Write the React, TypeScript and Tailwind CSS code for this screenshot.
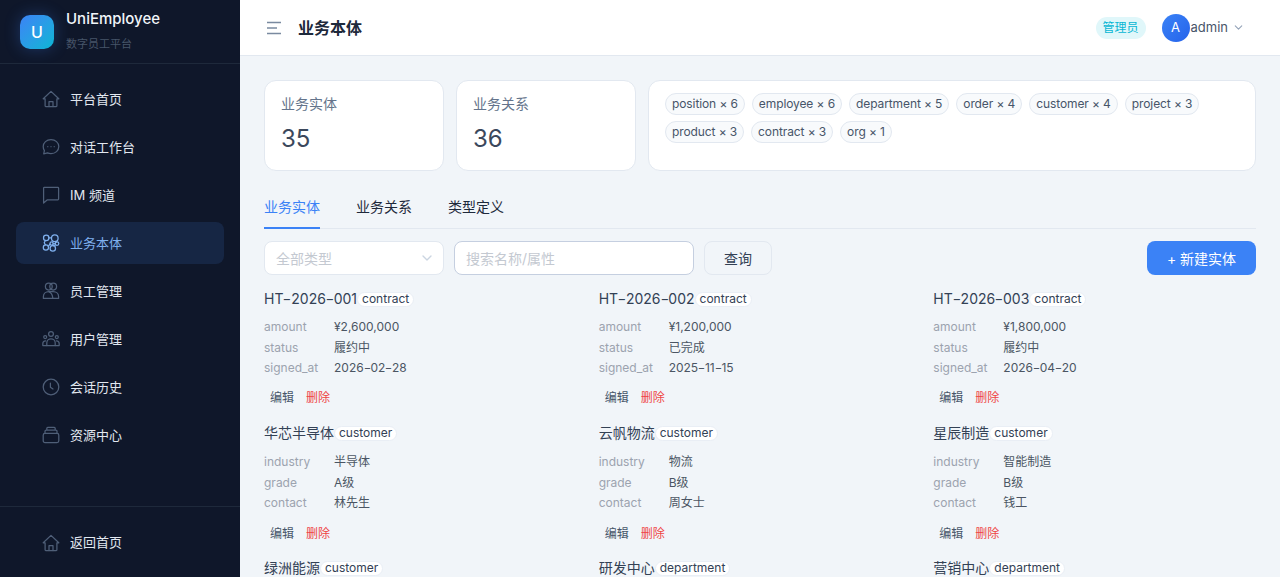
import { ChevronDown } from "lucide-react";
import { Fragment } from "react";
import type { ReactNode } from "react";

const fontStack = "font-['Inter','Noto_Sans_CJK_SC',sans-serif]";

const Ico = ({ children }: { children: ReactNode }) => (
  <svg viewBox="0 0 18 18" fill="none" stroke="currentColor" strokeWidth="1.25" strokeLinecap="round" strokeLinejoin="round" className="w-[18px] h-[18px] shrink-0">
    {children}
  </svg>
);

const HomeIcon = () => (
  <Ico>
    <path d="M1.2 8.8 9 1.4l7.8 7.4h-1.9v7a.7.7 0 0 1-.7.7H3.8a.7.7 0 0 1-.7-.7v-7H1.2Z" />
    <path d="M7 16.5v-4.8h4v4.8" />
  </Ico>
);

const navItems = [
  {
    label: "平台首页",
    icon: <HomeIcon />,
  },
  {
    label: "对话工作台",
    icon: (
      <Ico>
        <path d="M9 1.6c4.4 0 7.8 3 7.8 7s-3.4 7-7.8 7c-1.3 0-2.4-.2-3.5-.7l-3.8 1 .7-3.2C1.6 11.5 1.2 10 1.2 8.6c0-4 3.4-7 7.8-7Z" />
        <path d="M5.8 8.7h.01M9 8.7h.01M12.2 8.7h.01" />
      </Ico>
    ),
  },
  {
    label: "IM 频道",
    icon: (
      <Ico>
        <path d="M2.2 1.4h13.6a.8.8 0 0 1 .8.8v10.8a.8.8 0 0 1-.8.8H5.4l-3.8 3.2V2.2a.7.7 0 0 1 .6-.8Z" />
      </Ico>
    ),
  },
  {
    label: "业务本体",
    active: true,
    icon: (
      <Ico>
        <circle cx="4.2" cy="3.9" r="2.7" />
        <circle cx="12.8" cy="4.2" r="3.3" />
        <circle cx="3.9" cy="13.4" r="2.6" />
        <circle cx="10.8" cy="14.4" r="2.7" />
        <circle cx="15" cy="9.6" r="1.8" />
        <circle cx="9.6" cy="9.4" r="1.6" />
        <path d="M6.9 3.9h2.6M3.4 6.5l-1.2 2.2 1.2 2.1M6.4 12.4l1.6-2.6M11 9.8l2.4-.2M13.4 7.4l.8.6M11.2 11.6l2.6-.6" />
      </Ico>
    ),
  },
  {
    label: "员工管理",
    icon: (
      <Ico>
        <circle cx="6.8" cy="4.6" r="3.4" />
        <circle cx="11.2" cy="4.6" r="3.4" />
        <path d="M1.4 16.4v-1.8c0-3 2.4-5 5.4-5h4.4c3 0 5.4 2 5.4 5v1.8H1.4Z" />
        <path d="M7 9.8c2.2.8 3.6 3 3.8 6.4" />
      </Ico>
    ),
  },
  {
    label: "用户管理",
    icon: (
      <Ico>
        <circle cx="9" cy="4" r="2.4" />
        <circle cx="3.2" cy="7" r="1.5" />
        <circle cx="14.8" cy="7" r="1.5" />
        <path d="M4.8 15.6v-2.8c0-2.2 1.8-4 4.2-4s4.2 1.8 4.2 4v2.8" />
        <path d="M.8 15.6v-1.8c0-1.6 1.1-3 2.8-3M17.2 15.6v-1.8c0-1.6-1.1-3-2.8-3M.8 15.6h16.4" />
      </Ico>
    ),
  },
  {
    label: "会话历史",
    icon: (
      <Ico>
        <circle cx="9" cy="9" r="7.8" />
        <path d="M8.4 5.2v4l2.6 1.8" />
      </Ico>
    ),
  },
  {
    label: "资源中心",
    icon: (
      <Ico>
        <rect x="1.2" y="7.4" width="15.6" height="9.2" rx="1.8" />
        <path d="M3 7.4V5.2a1.2 1.2 0 0 1 1.2-1.2h9.6A1.2 1.2 0 0 1 15 5.2v2.2M4.8 4V2.4a1 1 0 0 1 1-1h6.4a1 1 0 0 1 1 1V4" />
      </Ico>
    ),
  },
];

const tags = [
  "position × 6",
  "employee × 6",
  "department × 5",
  "order × 4",
  "customer × 4",
  "project × 3",
  "product × 3",
  "contract × 3",
  "org × 1",
];

const entities = [
  { name: "HT-2026-001", type: "contract", attrs: [["amount", "¥2,600,000"], ["status", "履约中"], ["signed_at", "2026-02-28"]] },
  { name: "HT-2026-002", type: "contract", attrs: [["amount", "¥1,200,000"], ["status", "已完成"], ["signed_at", "2025-11-15"]] },
  { name: "HT-2026-003", type: "contract", attrs: [["amount", "¥1,800,000"], ["status", "履约中"], ["signed_at", "2026-04-20"]] },
  { name: "华芯半导体", type: "customer", tall: true, attrs: [["industry", "半导体"], ["grade", "A级"], ["contact", "林先生"]] },
  { name: "云帆物流", type: "customer", tall: true, attrs: [["industry", "物流"], ["grade", "B级"], ["contact", "周女士"]] },
  { name: "星辰制造", type: "customer", tall: true, attrs: [["industry", "智能制造"], ["grade", "B级"], ["contact", "钱工"]] },
  { name: "绿洲能源", type: "customer", attrs: [] },
  { name: "研发中心", type: "department", attrs: [] },
  { name: "营销中心", type: "department", attrs: [] },
];

// the hyphens in the reference are wider than this font's
const Dashed = ({ text }: { text: string }) => (
  <>
    {text.split("-").map((part, i) => (
      <Fragment key={i}>
        {i > 0 && <span className="inline-block px-[0.05em] scale-x-[1.35]">-</span>}
        {part}
      </Fragment>
    ))}
  </>
);

const StatCard = ({ label, value }: { label: string; value: string }) => (
  <div className="w-[180px] h-[91px] shrink-0 bg-white border border-[#e2e8f0] rounded-xl px-4 pt-[13px]">
    <div className="text-[14px] leading-[20px] text-[#64748b]">{label}</div>
    <div className="mt-[9px] text-[24px] leading-[32px] text-[#3b485c]">{value}</div>
  </div>
);

const EntityCard = ({ name, type, attrs, tall }: { name: string; type: string; attrs: string[][]; tall?: boolean }) => (
  <div className={tall ? "h-[123px]" : "h-[122px]"}>
    <div className="flex items-center h-[20px]">
      <span className="text-[14px] leading-[20px] text-[#334155]"><Dashed text={name} /></span>
      <span className="h-[15px] px-[4px] flex items-center rounded-full bg-white border border-[#e9eef5] text-[12px] text-[#334155]">{type}</span>
    </div>
    {attrs.length > 0 && (
      <>
        <div className={`${tall ? "mt-[9px]" : "mt-[8px]"} text-[12px]`}>
          {attrs.map(([k, v]) => (
            <div key={k} className="flex h-[20.5px] items-center">
              <span className="w-[70px] text-[#9ca3af]">{k}</span>
              <span className="text-[#4b5563]"><Dashed text={v} /></span>
            </div>
          ))}
        </div>
        <div className={`${tall ? "mt-[10px]" : "mt-[9px]"} flex h-[20px] items-center gap-3 pl-[6px] text-[12px]`}>
          <span className="text-[#475569]">编辑</span>
          <span className="text-[#ef4444]">删除</span>
        </div>
      </>
    )}
  </div>
);

export default function App() {
  return (
    <div className={`${fontStack} flex h-[577px] w-[1280px] overflow-hidden bg-[#f1f5f9]`}>
      {/* Sidebar */}
      <aside className="w-[240px] shrink-0 flex flex-col bg-[#0f172a]">
        <div className="h-[64px] shrink-0 flex items-center gap-3 pl-5 border-b border-[#1e293b]">
          <div className="w-[34px] h-[34px] rounded-[10px] bg-gradient-to-br from-[#3b82f6] to-[#06b6d4] shadow-[0_0_16px_rgba(59,130,246,0.3)] flex items-center justify-center text-white text-[16px] font-medium">U</div>
          <div>
            <div className="-mt-[2px] text-[15px] leading-[20px] font-medium text-[#f1f5f9]">UniEmployee</div>
            <div className="mt-[7px] text-[11px] leading-[16px] text-[#475569]">数字员工平台</div>
          </div>
        </div>
        <nav className="flex-1 px-4 pt-[14px] flex flex-col gap-[6px]">
          {navItems.map((item) => (
            <div
              key={item.label}
              className={`h-[42px] rounded-lg flex items-center gap-[10px] pl-[26px] pt-[2px] text-[13px] ${item.active ? "bg-[#162644] text-[#7fb0ee]" : "text-[#e2e8f0]"}`}
            >
              <span className={`-mt-[2px] ${item.active ? "text-[#7fb0ee]" : "text-[#4f5f78]"}`}>{item.icon}</span>
              {item.label}
            </div>
          ))}
        </nav>
        <div className="h-[71px] shrink-0 border-t border-[#1e293b] px-4 pt-[15px]">
          <div className="h-[42px] flex items-center gap-[10px] pl-[26px] text-[13px] text-[#e2e8f0]">
            <span className="text-[#4f5f78]"><HomeIcon /></span>
            返回首页
          </div>
        </div>
      </aside>

      <main className="flex-1 min-w-0 flex flex-col">
        {/* Header */}
        <header className="h-[56px] shrink-0 bg-white border-b border-[#e2e8f0] flex items-center pl-[27px] pr-[35px]">
          <svg viewBox="0 0 14 14" fill="none" stroke="#7a8aa0" strokeWidth="1.4" className="w-[14px] h-[14px]">
            <path d="M0 1.5h14M0 7h10M0 12.5h14" />
          </svg>
          <h1 className="ml-[17px] text-[16px] font-semibold text-[#1e293b]">业务本体</h1>
          <div className="ml-auto flex items-center">
            <span className="h-[22px] px-[7px] rounded-full bg-[#e0f7fa] text-[#06b6d4] text-[12px] leading-[22px]">管理员</span>
            <span className="ml-4 w-7 h-7 rounded-full bg-gradient-to-br from-[#3b82f6] to-[#2563eb] text-white text-[13px] flex items-center justify-center">A</span>
            <span className="ml-px text-[13px] text-[#475569]">admin</span>
            <ChevronDown className="ml-[4px] w-[13px] h-[13px] text-[#94a3b8]" />
          </div>
        </header>

        <div className="flex-1 min-h-0 overflow-hidden px-6 pt-6">
          {/* Stats */}
          <div className="flex gap-3">
            <StatCard label="业务实体" value="35" />
            <StatCard label="业务关系" value="36" />
            <div className="flex-1 h-[91px] bg-white border border-[#e2e8f0] rounded-xl pl-4 pr-4 pt-3">
              <div className="flex flex-wrap gap-x-[7px] gap-y-[6px]">
                {tags.map((t) => (
                  <span key={t} className="h-[22px] px-[6px] rounded-full bg-[#f8fafc] border border-[#e2e8f0] text-[12px] leading-[20px] tracking-[-0.1px] text-[#475569]">{t}</span>
                ))}
              </div>
            </div>
          </div>

          {/* Tabs */}
          <div className="mt-[15px] h-[43px] flex gap-9 border-b border-[#e2e8f0] text-[14px]">
            <div className="h-[43px] leading-[42px] border-b-2 border-[#3b82f6] text-[#3b82f6]">业务实体</div>
            <div className="leading-[42px] text-[#1e293b]">业务关系</div>
            <div className="leading-[42px] text-[#1e293b]">类型定义</div>
          </div>

          {/* Toolbar */}
          <div className="mt-3 h-[34px] flex items-center gap-[10px] text-[14px]">
            <div className="w-[180px] h-[34px] rounded-lg bg-white border border-[#e2e8f0] flex items-center justify-between pl-[11px] pr-[8px] text-[#c4c9d1]">
              全部类型
              <ChevronDown className="w-4 h-4 text-[#cbd5e1]" />
            </div>
            <div className="w-[240px] h-[34px] rounded-lg bg-white border border-[#c5cfe0] flex items-center pl-[11px] text-[#c4c9d1]">搜索名称/属性</div>
            <div className="w-[68px] h-[34px] rounded-lg bg-[#f1f5f9] border border-[#e2e8f0] flex items-center justify-center text-[#334155]">查询</div>
            <div className="ml-auto w-[109px] h-[34px] rounded-lg bg-[#3b82f6] flex items-center justify-center text-white">+ 新建实体</div>
          </div>

          {/* Entities */}
          <div className="mt-[14px] grid grid-cols-3 gap-3">
            {entities.map((e) => (
              <EntityCard key={e.name} {...e} />
            ))}
          </div>
        </div>
      </main>
    </div>
  );
}
